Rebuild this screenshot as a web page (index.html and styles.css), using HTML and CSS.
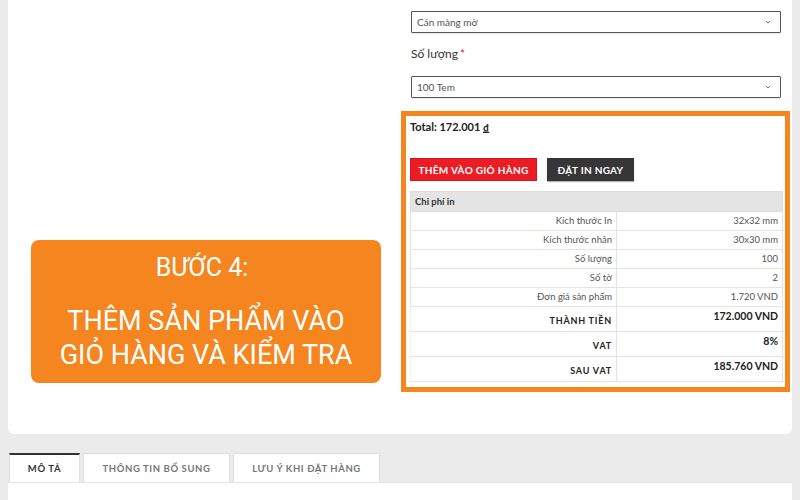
FILE: index.html
```html
<!DOCTYPE html>
<html lang="vi">
<head>
    <meta charset="UTF-8">
    <meta name="viewport" content="width=device-width, initial-scale=1.0">
    <title>In tem nhãn - Bước 4</title>
    <link rel="stylesheet" href="styles.css">
</head>
<body>
    <div class="card product">
        <div class="promo-col">
            <div class="step-card">
                <p class="step-title">BƯỚC 4:</p>
                <p class="step-text">THÊM SẢN PHẨM VÀO<br>GIỎ HÀNG VÀ KIỂM TRA</p>
            </div>
        </div>

        <div class="summary">
            <div class="select-box">
                <span>Cán màng mờ</span>
                <svg width="8" height="6" viewBox="0 0 8 6"><path d="M2 2l2 2 2-2" fill="none" stroke="#777" stroke-width="1"/></svg>
            </div>

            <div class="field-label">Số lượng<span class="req">*</span></div>

            <div class="select-box">
                <span>100 Tem</span>
                <svg width="8" height="6" viewBox="0 0 8 6"><path d="M2 2l2 2 2-2" fill="none" stroke="#777" stroke-width="1"/></svg>
            </div>

            <div class="order-box">
                <div class="total">Total: 172.001 <span class="currency">₫</span></div>

                <div class="actions">
                    <button class="btn btn-cart">THÊM VÀO GIỎ HÀNG</button>
                    <button class="btn btn-buy">ĐẶT IN NGAY</button>
                </div>

                <table class="cost-table">
                    <thead>
                        <tr>
                            <th colspan="2">Chi phí in</th>
                        </tr>
                    </thead>
                    <tbody>
                        <tr>
                            <td>Kích thước In</td>
                            <td>32x32 mm</td>
                        </tr>
                        <tr>
                            <td>Kích thước nhân</td>
                            <td>30x30 mm</td>
                        </tr>
                        <tr>
                            <td>Số lượng</td>
                            <td>100</td>
                        </tr>
                        <tr>
                            <td>Số tờ</td>
                            <td>2</td>
                        </tr>
                        <tr>
                            <td>Đơn giá sản phẩm</td>
                            <td>1.720 VND</td>
                        </tr>
                        <tr class="sum-row">
                            <td>THÀNH TIỀN</td>
                            <td>172.000 VND</td>
                        </tr>
                        <tr class="sum-row">
                            <td>VAT</td>
                            <td>8%</td>
                        </tr>
                        <tr class="sum-row">
                            <td>SAU VAT</td>
                            <td>185.760 VND</td>
                        </tr>
                    </tbody>
                </table>
            </div>
        </div>
    </div>

    <div class="tabs">
        <div class="tab active">MÔ TẢ</div>
        <div class="tab">THÔNG TIN BỔ SUNG</div>
        <div class="tab">LƯU Ý KHI ĐẶT HÀNG</div>
    </div>
    <div class="tab-panel"></div>
</body>
</html>
```

FILE: styles.css
```css
body {
    margin: 0;
    padding: 0 8px;
    background-color: #ebebeb;
    font-family: Lato, "Open Sans", sans-serif;
    color: #333;
    height: 500px;
    overflow: hidden;
}

.card {
    background-color: #fff;
    border-radius: 0 0 6px 6px;
}

.product {
    display: grid;
    grid-template-columns: 393px 389px;
    padding-bottom: 42px;
}

/* left column: step callout */
.promo-col {
    padding-top: 240px;
}
.step-card {
    margin-left: 23px;
    width: 350px;
    height: 143px;
    box-sizing: border-box;
    padding: 13px 0 11px;
    background-color: #f5861f;
    border-radius: 8px;
    color: #fff;
    text-align: center;
    font-family: Roboto, "Liberation Sans", sans-serif;
}
.step-title {
    margin: 0 0 0 -8px;
    font-size: 25px;
    line-height: 30px;
}
.step-text {
    margin: 21px 0 0;
    font-size: 27px;
    line-height: 34px;
}

/* right column: order summary */
.summary {
    padding-top: 11px;
}
.select-box {
    margin: 0 9px 0 10px;
    height: 22px;
    box-sizing: border-box;
    border: 1px solid #555;
    border-radius: 1px;
    padding: 0 8px 0 5px;
    display: flex;
    align-items: center;
    justify-content: space-between;
    font-size: 10px;
    color: #555;
    box-shadow: 0 1px 1px rgba(0, 0, 0, 0.08);
}
.field-label {
    margin: 13px 10px 14px;
    font-size: 12px;
    line-height: 16px;
    color: #333;
}
.req {
    color: #e31e24;
    margin-left: 2px;
}

.order-box {
    margin-top: 13px;
    border: 5px solid #f5861f;
    padding: 4px 2px 5px 4px;
}
.total {
    font-size: 11px;
    font-weight: bold;
    line-height: 14px;
    color: #222;
}
.currency {
    text-decoration: underline;
    font-size: 10px;
}
.actions {
    margin-top: 24px;
    display: flex;
    gap: 10px;
}
.btn {
    height: 23px;
    border: none;
    color: #fff;
    font-family: Lato, "Open Sans", sans-serif;
    font-size: 10px;
    font-weight: bold;
    letter-spacing: 0.3px;
    cursor: pointer;
}
.btn-cart {
    width: 127px;
    background-color: #ec1c24;
    box-shadow: inset 0 0 0 1px #d5151c;
}
.btn-buy {
    width: 87px;
    background-color: #363636;
    box-shadow: 0 1px 1px rgba(0, 0, 0, 0.3);
}

.cost-table {
    margin-top: 10px;
    width: 373px;
    border-collapse: collapse;
    font-size: 9.5px;
    line-height: 12px;
    color: #555;
}
.cost-table th {
    background-color: #e4e4e4;
    text-align: left;
    font-weight: bold;
    color: #333;
    height: 20px;
    padding: 0 4px;
    border: 1px solid #ddd;
    box-sizing: border-box;
}
.cost-table td {
    border: 1px solid #e3e3e3;
    height: 19px;
    padding: 0 4px;
    text-align: right;
    box-sizing: border-box;
}
.cost-table td:first-child {
    width: 206px;
}
.sum-row td {
    height: 25px;
    font-weight: bold;
    color: #222;
}
.sum-row td:first-child {
    letter-spacing: 0.8px;
    font-size: 9px;
    padding-top: 3px;
    border-left-color: #f4f4f4;
}
.sum-row td:last-child {
    vertical-align: top;
    padding-top: 3px;
    font-size: 10.5px;
}

/* tabs */
.tabs {
    margin-top: 19px;
    display: flex;
    gap: 3px;
    padding-left: 1px;
}
.tab {
    height: 29px;
    box-sizing: border-box;
    background-color: #fff;
    border: 1px solid #e0e0e0;
    border-bottom: none;
    display: flex;
    align-items: center;
    justify-content: center;
    font-size: 9.5px;
    font-weight: bold;
    letter-spacing: 0.6px;
    color: #777;
}
.tab:nth-child(1) {
    width: 71px;
}
.tab:nth-child(2),
.tab:nth-child(3) {
    width: 147px;
}
.tab.active {
    border-top: 2px solid #333;
    color: #333;
}
.tab-panel {
    background-color: #fff;
    height: 40px;
    border-top: 1px solid #e6e6e6;
}
```
